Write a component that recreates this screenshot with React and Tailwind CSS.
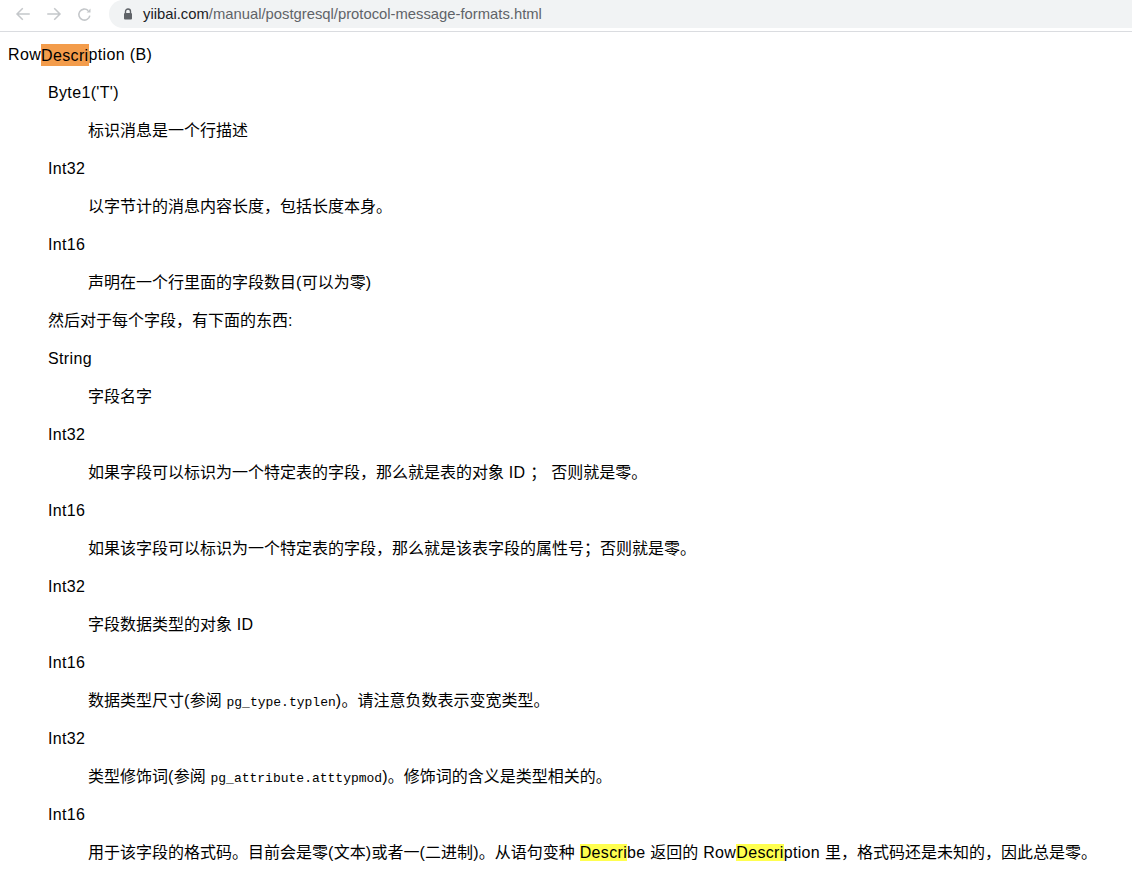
import React from "react";

const font = { fontFamily: '"Liberation Sans", "Noto Sans CJK SC", Arial, sans-serif' };

function T({ children }) {
  if (typeof children !== "string") return children;
  const parts = children.split(/([\u3000-\u303f\u4e00-\u9fff\uff00-\uffef]+)/);
  return (
    <>
      {parts.map((p, i) =>
        p === "" ? null : /[\u3000-\u303f\u4e00-\u9fff\uff00-\uffef]/.test(p) ? (
          <span key={i}>{p}</span>
        ) : (
          <span key={i} className="tracking-[0.35px]">{p}</span>
        )
      )}
    </>
  );
}

function Code({ children }) {
  return (
    <span className="text-[13px]" style={{ fontFamily: '"Liberation Mono", "DejaVu Sans Mono", monospace' }}>
      {children}
    </span>
  );
}

function Y({ children }) {
  return <span className="bg-[#ffff4f] tracking-[0.35px]">{children}</span>;
}

const rows = [
  [2, "标识消息是一个行描述"],
  [1, "Int32"],
  [2, "以字节计的消息内容长度，包括长度本身。"],
  [1, "Int16"],
  [2, "声明在一个行里面的字段数目(可以为零)"],
  [1, "然后对于每个字段，有下面的东西:"],
  [1, "String"],
  [2, "字段名字"],
  [1, "Int32"],
  [2, "如果字段可以标识为一个特定表的字段，那么就是表的对象 ID ； 否则就是零。"],
  [1, "Int16"],
  [2, "如果该字段可以标识为一个特定表的字段，那么就是该表字段的属性号；否则就是零。"],
  [1, "Int32"],
  [2, "字段数据类型的对象 ID"],
  [1, "Int16"],
  [2, <><T>数据类型尺寸(参阅 </T><Code>pg_type.typlen</Code><T>)。请注意负数表示变宽类型。</T></>],
  [1, "Int32"],
  [2, <><T>类型修饰词(参阅 </T><Code>pg_attribute.atttypmod</Code><T>)。修饰词的含义是类型相关的。</T></>],
  [1, "Int16"],
  [2, <><T>用于该字段的格式码。目前会是零(文本)或者一(二进制)。从语句变种 </T><Y>Descri</Y><T>be 返回的 Row</T><Y>Descri</Y><T>ption 里，格式码还是未知的，因此总是零。</T></>],
];

export default function App() {
  return (
    <div className="w-[1132px] h-[878px] overflow-hidden bg-white text-black" style={font}>
      {/* Browser toolbar */}
      <div className="h-[32px] flex items-start border-b border-[#dadce0] bg-white">
        <div className="flex items-center h-[28px] pl-[14px] gap-[13px] text-[#c4c7ca]">
          <svg width="18" height="18" viewBox="0 0 24 24" fill="none" stroke="currentColor" strokeWidth="2" strokeLinecap="square">
            <path d="M20 12H5M11 5l-7 7 7 7" />
          </svg>
          <svg width="18" height="18" viewBox="0 0 24 24" fill="none" stroke="currentColor" strokeWidth="2" strokeLinecap="square">
            <path d="M4 12h15M13 5l7 7-7 7" />
          </svg>
          <svg width="17" height="17" viewBox="0 0 24 24" fill="none" stroke="currentColor" strokeWidth="2.2">
            <path d="M19.5 13.5A7.8 7.8 0 1 1 17.2 6.5" />
            <path d="M20.5 3.5v5.5H15z" fill="currentColor" stroke="none" />
          </svg>
        </div>
        <div className="ml-[16px] flex-1 h-[28px] bg-[#f1f3f4] rounded-l-[14px] flex items-center pl-[14px]">
          <svg width="10" height="12" viewBox="0 0 10 12" className="text-[#5f6368]">
            <path d="M2.5 5V3.5a2.5 2.5 0 0 1 5 0V5" fill="none" stroke="currentColor" strokeWidth="1.4" />
            <rect x="1" y="5" width="8" height="6.5" rx="1" fill="currentColor" />
          </svg>
          <span className="ml-[10px] text-[14.8px]" style={{ fontFamily: '"Liberation Sans", Arial, sans-serif' }}>
            <span className="text-[#202124]">yiibai.com</span>
            <span className="text-[#5f6368]">/manual/postgresql/protocol-message-formats.html</span>
          </span>
        </div>
      </div>

      {/* Content */}
      <div className="pt-[4px] text-[16px]">
        <div className="h-[38px] flex items-center pl-[8px] whitespace-nowrap">
          <span className="tracking-[0.35px]">
            Row<span className="bg-[#f39c4b] py-[2.5px]">Descri</span>ption (B)
          </span>
        </div>
        <div className="h-[38px] flex items-center pl-[48px] whitespace-nowrap">
          <T>Byte1('T')</T>
        </div>
        {rows.map(([lvl, content], i) => (
          <div
            key={i}
            className={
              "h-[38px] flex items-center whitespace-nowrap " + (lvl === 2 ? "pl-[88px]" : "pl-[48px]")
            }
          >
            <span>{typeof content === "string" ? <T>{content}</T> : content}</span>
          </div>
        ))}
      </div>
    </div>
  );
}
